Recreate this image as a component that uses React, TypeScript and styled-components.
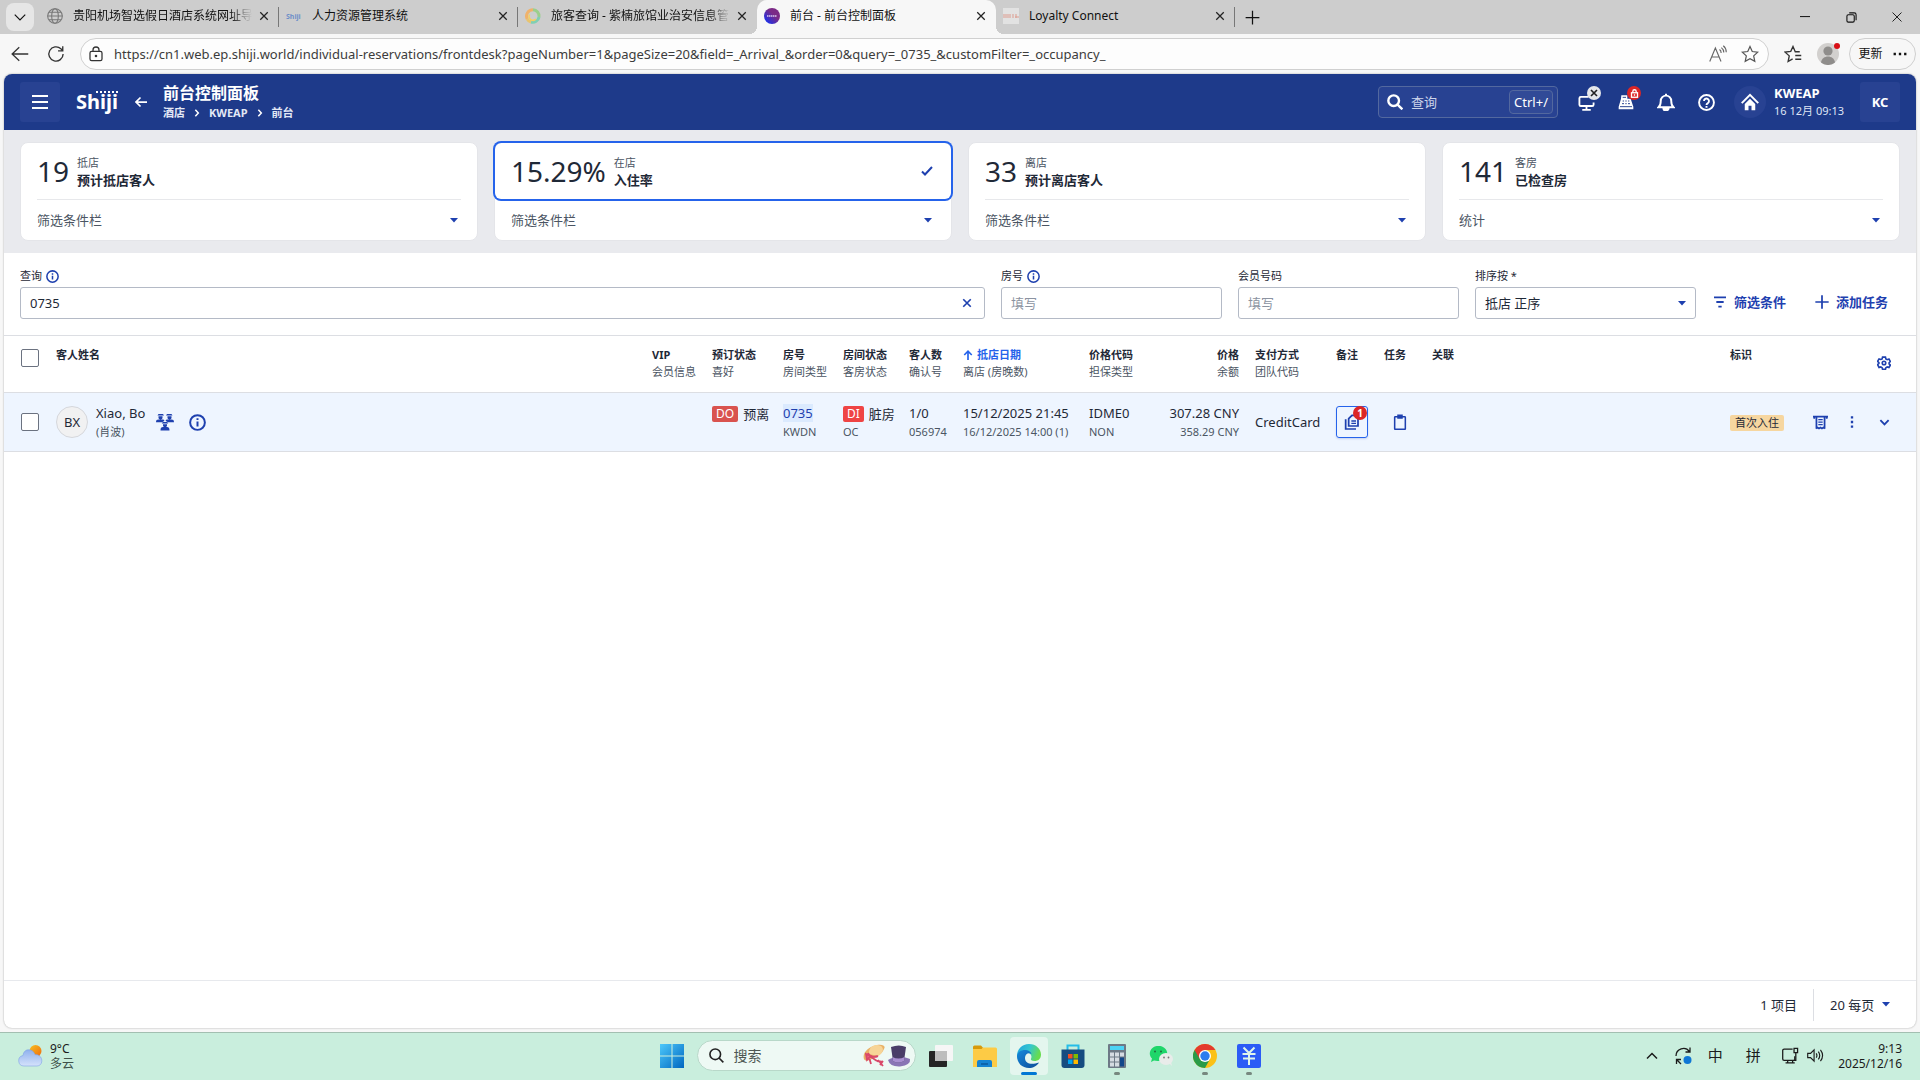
import React from "react";
import styled, { createGlobalStyle } from "styled-components";

const FONT = `"Noto Sans", "Noto Sans CJK SC", sans-serif`;
const navy = "#1e3a8a";
const blue = "#1e40af";
const ink = "#1f2937";
const muted = "#4b5563";

const Global = createGlobalStyle`
  *, *::before, *::after { box-sizing: border-box; }
  body { margin: 0; background: #f7f7f7; color: ${ink}; font: 13px/20px ${FONT}; }
  button, input, select { font: inherit; color: inherit; margin: 0; }
  button { border: 0; padding: 0; background: none; cursor: pointer; }
  svg { display: block; flex: none; }
`;

/* ---------- icons ---------- */

type IconProps = { size?: number; w?: number; color?: string; children?: React.ReactNode };
const Icon = ({ size = 16, w = 2, color = "currentColor", children }: IconProps) => (
  <svg width={size} height={size} viewBox="0 0 24 24" fill="none" stroke={color} strokeWidth={w} aria-hidden="true">
    {children}
  </svg>
);
const InfoIcon = ({ size = 13 }: { size?: number }) => (
  <Icon size={size} w={2.8} color={blue}>
    <circle cx="12" cy="12" r="10.4" />
    <path d="M12 10.5v7M12 6v2.6" />
  </Icon>
);
const Caret = () => (
  <svg width="8" height="5" viewBox="0 0 8 5" aria-hidden="true">
    <path d="M0 0h8L4 4.6z" fill={blue} />
  </svg>
);
const CloseIcon = ({ size = 10, w = 3, color = "#222" }: IconProps) => (
  <Icon size={size} w={w} color={color}><path d="M3 3l18 18M21 3L3 21" /></Icon>
);

/* ---------- browser chrome ---------- */

const Screen = styled.div`
  min-height: 100vh;
  display: flex;
  flex-direction: column;
`;
const TabStrip = styled.div`
  display: flex;
  align-items: center;
  height: 34px;
  background: #cdcdcd;
  color: #111;
  font-size: 12px;
`;
const TabMenu = styled.button`
  display: grid;
  place-items: center;
  width: 28px;
  height: 28px;
  margin: 0 6px;
  border-radius: 8px;
  background: #e6e6e6;
`;
const Tab = styled.div<{ $active?: boolean; $line?: boolean }>`
  position: relative;
  display: flex;
  align-items: center;
  gap: 10px;
  flex: 0 1 239px;
  min-width: 0;
  height: 34px;
  padding: 0 7px;
  padding-bottom: 2px;
  border-radius: 10px 10px 0 0;
  background: ${(p) => (p.$active ? "#f7f7f7" : "none")};
  ${(p) => p.$line && `&::after { content: ""; position: absolute; right: 0; top: 7px; width: 1px; height: 20px; background: #777; }`}
  ${(p) =>
    p.$active &&
    `&::before, &::after { content: ""; position: absolute; bottom: 0; width: 8px; height: 8px; }
     &::before { left: -8px; background: radial-gradient(circle at 0 0, #cdcdcd 8px, #f7f7f7 8px); }
     &::after { right: -8px; background: radial-gradient(circle at 100% 0, #cdcdcd 8px, #f7f7f7 8px); }`}
`;
const TabTitle = styled.span<{ $fade?: boolean }>`
  flex: 1;
  min-width: 0;
  overflow: hidden;
  white-space: nowrap;
  ${(p) => p.$fade && `mask-image: linear-gradient(90deg, #000 88%, transparent);`}
`;
const TabClose = styled.button`
  display: grid;
  place-items: center;
  width: 16px;
  height: 16px;
  margin-left: -6px;
`;
const NewTab = styled(TabClose)`
  margin-left: 9px;
`;
const WindowButtons = styled.div`
  display: flex;
  margin-left: auto;
`;
const WindowButton = styled.button`
  display: grid;
  place-items: center;
  width: 46px;
  height: 34px;
`;
const Toolbar = styled.div`
  display: flex;
  align-items: center;
  gap: 10px;
  height: 40px;
  padding: 0 4px 0 10px;
  color: #333;
`;
const NavButtons = styled.div`
  display: flex;
  gap: 16px;
  padding-right: 4px;
`;
const ToolButton = styled.button<{ $wide?: boolean }>`
  display: grid;
  place-items: center;
  width: ${(p) => (p.$wide ? 28 : 20)}px;
  height: 24px;
`;
const AddressBar = styled.div`
  display: flex;
  align-items: center;
  flex: 1;
  height: 32px;
  padding: 0 8px 0 5px;
  border: 1px solid #d0d0d0;
  border-radius: 16px;
  background: #fdfdfd;
`;
const Address = styled.input`
  flex: 1;
  min-width: 0;
  margin-left: 8px;
  padding: 0;
  border: 0;
  outline: 0;
  background: none;
  color: #3c3c3c;
  font-size: 13px;
`;
const AddressTools = styled.div`
  display: flex;
  gap: 12px;
`;
const Avatar = styled.button`
  position: relative;
  width: 22px;
  height: 22px;
`;
const AvatarDot = styled.i`
  position: absolute;
  right: -1px;
  top: 0;
  width: 6px;
  height: 6px;
  border-radius: 50%;
  background: #d80f16;
`;
const UpdateButton = styled.button`
  display: flex;
  align-items: center;
  justify-content: center;
  gap: 10px;
  width: 67px;
  height: 32px;
  border: 1px solid #cfcfcf;
  border-radius: 16px;
  color: #111;
  font-size: 12px;
`;

/* ---------- page ---------- */

const Page = styled.main`
  flex: 1;
  display: flex;
  flex-direction: column;
  margin: 0 4px 4px;
  border-radius: 8px;
  overflow: hidden;
  background: #fff;
  box-shadow: 0 0 2px rgba(0, 0, 0, 0.35);
`;
const AppHeader = styled.header`
  display: flex;
  align-items: center;
  gap: 16px;
  height: 56px;
  padding: 0 16px;
  background: ${navy};
  color: #fff;
`;
const SquareButton = styled.button`
  display: grid;
  place-items: center;
  width: 40px;
  height: 40px;
  border-radius: 3px;
  background: #284292;
  color: #fff;
  font-weight: 700;
`;
const Logo = styled.span`
  position: relative;
  width: 43px;
  font-size: 20px;
  line-height: 28px;
  font-weight: 700;
`;
const LogoDots = styled.i`
  position: absolute;
  left: 20px;
  right: 0;
  top: 3px;
  height: 2px;
  background: repeating-linear-gradient(90deg, #fff 0 2px, transparent 2px 4px);
`;
const Heading = styled.div`
  flex: 1;
`;
const Title = styled.h1`
  margin: 0;
  font-size: 16px;
  line-height: 22px;
  font-weight: 700;
`;
const Crumbs = styled.nav`
  display: flex;
  align-items: center;
  gap: 8px;
  font-size: 11px;
  line-height: 18px;
  font-weight: 700;
  a { color: #e3e8f6; text-decoration: none; }
`;
const HeaderTools = styled.div`
  display: flex;
  align-items: center;
  gap: 8px;
`;
const HeaderSearch = styled.label`
  display: flex;
  align-items: center;
  gap: 8px;
  width: 180px;
  height: 32px;
  padding: 0 4px 0 8px;
  border: 1px solid #53689f;
  border-radius: 4px;
  background: #284292;
  input { flex: 1; min-width: 0; padding: 0; border: 0; outline: 0; background: none; }
  input::placeholder { color: #cdd5ea; opacity: 1; }
  kbd { padding: 0 4px; border: 1px solid #53689f; border-radius: 4px; font: 13px/22px ${FONT}; background: #314a97; }
`;
const IconRow = styled.div`
  display: flex;
`;
const HeaderIcon = styled.button`
  position: relative;
  display: grid;
  place-items: center;
  width: 40px;
  height: 40px;
  color: #fff;
`;
const HeaderBadge = styled.i<{ $red?: boolean }>`
  position: absolute;
  right: 5px;
  top: 4px;
  display: grid;
  place-items: center;
  width: 14px;
  height: 14px;
  border-radius: 50%;
  background: ${(p) => (p.$red ? "#dc2626" : "#e5e7eb")};
`;
const HomeButton = styled.button`
  display: grid;
  place-items: center;
  width: 32px;
  height: 32px;
  border-radius: 50%;
  background: #284292;
`;
const Property = styled.div`
  margin-right: 8px;
  width: 70px;
  white-space: nowrap;
  font-size: 11px;
  line-height: 18px;
  color: #dfe5f5;
  strong { display: block; font-size: 13px; color: #fff; }
`;

const Cards = styled.section`
  display: grid;
  grid-template-columns: repeat(4, 1fr);
  gap: 16px;
  padding: 12px 16px;
  background: #e9eaee;
`;
const Card = styled.article`
  border: 1px solid #e4e5e9;
  border-radius: 8px;
  background: #fff;
`;
const CardTop = styled.button<{ $selected?: boolean }>`
  display: flex;
  align-items: center;
  gap: 8px;
  width: 100%;
  height: 56px;
  padding: 0 18px 0 16px;
  border-radius: 6px;
  text-align: left;
  ${(p) => p.$selected && `box-shadow: 0 0 0 2px #2563eb;`}
  svg { margin-left: auto; }
`;
const CardNumber = styled.span`
  font-size: 28px;
  line-height: 40px;
`;
const CardLabel = styled.span`
  padding-top: 2px;
  font-size: 11px;
  line-height: 16px;
  color: ${muted};
  strong { display: block; font-size: 13px; line-height: 18px; color: ${ink}; }
`;
const Divider = styled.hr<{ $hidden?: boolean }>`
  height: 1px;
  margin: 0 16px;
  border: 0;
  background: ${(p) => (p.$hidden ? "transparent" : "#e7e8eb")};
`;
const CardMenu = styled.button`
  display: flex;
  align-items: center;
  justify-content: space-between;
  width: 100%;
  height: 40px;
  padding: 0 19px 0 16px;
  color: ${muted};
`;

const Filters = styled.form`
  display: flex;
  align-items: flex-end;
  gap: 16px;
  padding: 15px 28px 16px 16px;
  border-bottom: 1px solid #dcdee3;
`;
const Field = styled.div<{ $grow?: boolean }>`
  flex: ${(p) => (p.$grow ? "1" : "0 0 221px")};
  min-width: 0;
`;
const FieldLabel = styled.label`
  display: flex;
  align-items: center;
  gap: 4px;
  margin-bottom: 3px;
  font-size: 11px;
  line-height: 16px;
`;
const Box = styled.div`
  display: flex;
  align-items: center;
  height: 32px;
  padding: 0 9px;
  border: 1px solid #b4bac6;
  border-radius: 3px;
  background: #fff;
  input, select { flex: 1; min-width: 0; padding: 0; border: 0; outline: 0; background: none; appearance: none; }
  input::placeholder { color: #8b93a1; opacity: 1; }
`;
const TextButton = styled.button`
  display: flex;
  align-items: center;
  gap: 6px;
  height: 32px;
  padding-bottom: 2px;
  color: ${blue};
  font-weight: 700;
  white-space: nowrap;
  & + & { margin-left: 12px; }
`;

const TableArea = styled.section`
  flex: 1;
`;
const Table = styled.table`
  width: 100%;
  border-collapse: separate;
  border-spacing: 0;
  table-layout: fixed;
`;
const Th = styled.th<{ $right?: boolean; $sorted?: boolean; $middle?: boolean }>`
  height: 57px;
  padding: ${(p) => (p.$middle ? "0 8px" : "10px 8px 0")};
  border-bottom: 1px solid #dcdee3;
  vertical-align: ${(p) => (p.$middle ? "middle" : "top")};
  text-align: ${(p) => (p.$right ? "right" : "left")};
  white-space: nowrap;
  font-size: 11px;
  line-height: 17px;
  font-weight: 400;
  color: ${muted};
  strong { display: flex; align-items: center; gap: 4px; justify-content: ${(p) => (p.$right ? "flex-end" : "flex-start")}; color: ${(p) => (p.$sorted ? "#2563eb" : ink)}; }
`;
const Td = styled.td<{ $right?: boolean }>`
  height: 59px;
  padding: 0 8px;
  border-bottom: 1px solid #dcdee3;
  background: #eef5ff;
  text-align: ${(p) => (p.$right ? "right" : "left")};
  white-space: nowrap;
`;
const Check = styled.input`
  display: block;
  appearance: none;
  width: 18px;
  height: 18px;
  margin: 0 0 0 9px;
  border: 1px solid #6b7280;
  border-radius: 2px;
  background: #fff;
`;
const HeadCheck = styled.div`
  padding-bottom: 12px;
`;
const Main = styled.div`
  display: flow-root;
  height: 19px;
  line-height: 19px;
`;
const StatusMain = styled.div`
  display: flex;
  align-items: center;
  gap: 5px;
  height: 19px;
`;
const Sub = styled.div`
  min-height: 17px;
  font-size: 11px;
  line-height: 17px;
  color: ${muted};
`;
const Guest = styled.div`
  display: flex;
  align-items: center;
  gap: 8px;
`;
const Initials = styled.span`
  display: grid;
  place-items: center;
  width: 32px;
  height: 32px;
  border: 1px solid #d5d7dc;
  border-radius: 50%;
  background: #f1f1f2;
`;
const IconButton = styled.button`
  display: grid;
  place-items: center;
  width: 32px;
  height: 32px;
  color: ${blue};
`;
const GuestIcons = styled.div`
  display: flex;
  margin-left: -4px;
`;
const Chip = styled.span<{ $bright?: boolean }>`
  padding: 0 4px;
  border-radius: 2px;
  background: ${(p) => (p.$bright ? "#ef4444" : "#d9534f")};
  color: #fff;
  font-size: 12px;
  line-height: 16px;
`;
const RoomLink = styled.a`
  color: ${blue};
  background: #dbeafe;
  text-decoration: none;
`;
const NoteButton = styled(IconButton)`
  position: relative;
  border: 1px solid #2563eb;
  border-radius: 3px;
  box-shadow: 0 1px 2px rgba(30, 64, 175, 0.2);
`;
const NoteCount = styled.i`
  position: absolute;
  right: 0;
  top: -1px;
  width: 14px;
  height: 14px;
  border-radius: 50%;
  background: #dc2626;
  color: #fff;
  font: 700 10px/14px ${FONT};
`;
const Tag = styled.span`
  display: inline-block;
  padding: 0 5px;
  border-radius: 2px;
  background: #f6d6a0;
  font-size: 11px;
  line-height: 16px;
`;
const Actions = styled.div`
  display: flex;
  justify-content: flex-end;
  margin-right: 8px;
`;
const HeadActions = styled(Actions)`
  padding-bottom: 3px;
`;
const PageFooter = styled.footer`
  display: flex;
  align-items: center;
  justify-content: flex-end;
  height: 48px;
  padding-right: 26px;
  border-top: 1px solid #e7e9ed;
`;
const PageSize = styled.label`
  display: flex;
  align-items: center;
  gap: 7px;
  height: 32px;
  margin-left: 16px;
  padding-left: 16px;
  border-left: 1px solid #dcdee3;
  select { padding: 0; border: 0; outline: 0; background: none; appearance: none; }
`;

/* ---------- desktop taskbar ---------- */

const Taskbar = styled.footer`
  display: grid;
  grid-template-columns: 1fr auto 1fr;
  align-items: center;
  height: 48px;
  padding-bottom: 2px;
  border-top: 1px solid #a3bfb1;
  background: #c9eedd;
  color: #1b1b1b;
  font-size: 12px;
  line-height: 15px;
`;
const Weather = styled.button`
  display: flex;
  align-items: center;
  gap: 7px;
  padding-left: 18px;
  text-align: left;
  small { display: block; font-size: 12px; color: #40514a; }
`;
const Apps = styled.div`
  display: flex;
  align-items: center;
`;
const AppButton = styled.button<{ $active?: boolean; $running?: boolean }>`
  position: relative;
  display: grid;
  place-items: center;
  width: 38px;
  height: 38px;
  margin: 0 3px;
  border-radius: 4px;
  background: ${(p) => (p.$active ? "#e4f6ee" : "none")};
  ${(p) =>
    (p.$active || p.$running) &&
    `&::after { content: ""; position: absolute; bottom: 0; width: ${p.$active ? 16 : 6}px; height: 3px; border-radius: 2px; background: ${p.$active ? "#0078d4" : "#77887f"}; }`}
`;
const TaskSearch = styled.label`
  display: flex;
  align-items: center;
  gap: 10px;
  width: 219px;
  height: 31px;
  margin: 0 3px;
  padding: 0 4px 0 11px;
  border: 1px solid #b8d8c9;
  border-radius: 16px;
  background: #eef9f4;
  input { flex: 1; min-width: 0; padding: 0; border: 0; outline: 0; background: none; font-size: 14px; }
  input::placeholder { color: #4d5652; opacity: 1; }
`;
const Tray = styled.div`
  display: flex;
  align-items: center;
  justify-content: flex-end;
  padding-right: 18px;
`;
const TrayButton = styled.button<{ $w: number }>`
  display: grid;
  place-items: center;
  width: ${(p) => p.$w}px;
  height: 32px;
  font-size: 15px;
`;
const Clock = styled.time`
  margin-left: 12px;
  text-align: right;
`;

/* ---------- data ---------- */

const cards = [
  { value: "19", label: "抵店", title: "预计抵店客人", menu: "筛选条件栏" },
  { value: "15.29%", label: "在店", title: "入住率", menu: "筛选条件栏", selected: true },
  { value: "33", label: "离店", title: "预计离店客人", menu: "筛选条件栏" },
  { value: "141", label: "客房", title: "已检查房", menu: "统计" },
];

const columns: { w: number; head: string; sub?: string; right?: boolean; sorted?: boolean }[] = [
  { w: 60, head: "VIP", sub: "会员信息" },
  { w: 71, head: "预订状态", sub: "喜好" },
  { w: 60, head: "房号", sub: "房间类型" },
  { w: 66, head: "房间状态", sub: "客房状态" },
  { w: 54, head: "客人数", sub: "确认号" },
  { w: 126, head: "抵店日期", sub: "离店 (房晚数)", sorted: true },
  { w: 76, head: "价格代码", sub: "担保类型" },
  { w: 90, head: "价格", sub: "余额", right: true },
  { w: 81, head: "支付方式", sub: "团队代码" },
  { w: 48, head: "备注" },
  { w: 48, head: "任务" },
  { w: 298, head: "关联" },
  { w: 74, head: "标识" },
];

const Favicon = ({ kind }: { kind: string }) => {
  if (kind === "globe")
    return (
      <Icon size={16} w={1.6} color="#777">
        <circle cx="12" cy="12" r="11" /><ellipse cx="12" cy="12" rx="5" ry="11" /><path d="M1 12h22M3 6.5h18M3 17.5h18" />
      </Icon>
    );
  if (kind === "shiji")
    return (
      <svg width="16" height="16" viewBox="0 0 16 16"><text x="0" y="11" fontSize="7" fontWeight="700" fill="#6d8fc9" fontFamily="Noto Sans">Shiji</text></svg>
    );
  if (kind === "ring")
    return (
      <svg width="16" height="16" viewBox="0 0 16 16" fill="none" strokeWidth="3">
        <path d="M2.2 11A6.4 6.4 0 0 1 8 1.8" stroke="#f0b26a" /><path d="M8 1.8A6.3 6.3 0 0 1 14 9" stroke="#9bcf8c" /><path d="M14 9A6.3 6.3 0 0 1 6 14" stroke="#7fcfb4" /><path d="M2.200 11A6.400 6.400 0 0 0 6 14" stroke="#e9c46e" /><path d="M4.500 6.500a4 4 0 0 0 6.500 4.500" stroke="#f4cf62" strokeWidth="1.500" />
      </svg>
    );
  if (kind === "front")
    return (
      <svg width="16" height="16" viewBox="0 0 16 16">
        <defs><linearGradient id="fd" x1="0" y1="1" x2="1" y2="0"><stop offset=".1" stopColor="#1530f0" /><stop offset=".6" stopColor="#7b2a86" /></linearGradient></defs>
        <circle cx="8" cy="8" r="8" fill="url(#fd)" /><path d="M3 8h10" stroke="#d9c9ee" strokeWidth="1.6" strokeDasharray="1.4 .5" />
      </svg>
    );
  return (
    <svg width="16" height="16" viewBox="0 0 16 16"><rect width="16" height="16" fill="#e2e2e2" /><path d="M1 6v4M3 6v4M5 6v4M7 6v4M10 6v4M13 6v4M16 9h-4" stroke="#dc9c8f" strokeWidth="1" /></svg>
  );
};

const tabs = [
  { icon: "globe", title: "贵阳机场智选假日酒店系统网址导", fade: true, line: true },
  { icon: "shiji", title: "人力资源管理系统", line: true },
  { icon: "ring", title: "旅客查询 - 紫楠旅馆业治安信息管", fade: true },
  { icon: "front", title: "前台 - 前台控制面板", active: true },
  { icon: "loyalty", title: "Loyalty Connect", line: true },
];

const Browser = () => (
  <>
    <TabStrip>
      <TabMenu aria-label="标签页"><Icon size={14}><path d="M3 8l9 9 9-9" /></Icon></TabMenu>
      {tabs.map((t) => (
        <Tab key={t.title} $active={t.active} $line={t.line}>
          <Favicon kind={t.icon} />
          <TabTitle $fade={t.fade}>{t.title}</TabTitle>
          <TabClose aria-label="关闭"><CloseIcon /></TabClose>
        </Tab>
      ))}
      <NewTab aria-label="新标签页"><Icon size={15}><path d="M12 1v22M1 12h22" /></Icon></NewTab>
      <WindowButtons>
        <WindowButton aria-label="最小化"><Icon size={10} w={2.400}><path d="M0 11h24" /></Icon></WindowButton>
        <WindowButton aria-label="还原"><Icon size={11} w={2.400}><rect x="2" y="6" width="16" height="16" rx="3" /><path d="M7 2h11a4 4 0 0 1 4 4v12" /></Icon></WindowButton>
        <WindowButton aria-label="关闭窗口"><CloseIcon size={12} w={2} /></WindowButton>
      </WindowButtons>
    </TabStrip>
    <Toolbar>
      <NavButtons>
        <ToolButton aria-label="后退"><Icon size={18} w={1.700}><path d="M23 12H2M11 3l-9.500 9 9.500 9" /></Icon></ToolButton>
        <ToolButton aria-label="刷新"><Icon size={18} w={1.800}><path d="M21.500 12A9.500 9.500 0 1 1 18.500 5L21 7.500M21 1.500v6.300h-6.300" /></Icon></ToolButton>
      </NavButtons>
      <AddressBar>
        <ToolButton aria-label="站点信息">
          <Icon size={16} w={1.900}><rect x="3" y="8" width="18" height="14" rx="2.500" /><path d="M7.500 8V6a4.500 4.500 0 0 1 9 0v2" /><circle cx="12" cy="15" r="1" /></Icon>
        </ToolButton>
        <Address aria-label="地址" defaultValue="https://cn1.web.ep.shiji.world/individual-reservations/frontdesk?pageNumber=1&pageSize=20&field=_Arrival_&order=0&query=_0735_&customFilter=_occupancy_" />
        <AddressTools>
          <ToolButton aria-label="朗读"><Icon size={18} w={1.500} color="#666"><path d="M1 22L8.500 4l7.500 18M4 16h9M14 6c1.500 1 2.200 2.500 2.200 4.500M16.500 3.500c2 1.500 3.200 3.500 3.200 6.500M19 1c2.600 2 4 5 4 8.500" /></Icon></ToolButton>
          <ToolButton aria-label="收藏"><Icon size={18} w={1.600} color="#555"><path d="M12 2l3 6.700 7.300.8-5.400 5 1.500 7.300L12 18.200l-6.400 3.600 1.500-7.300-5.400-5 7.300-.8z" /></Icon></ToolButton>
        </AddressTools>
      </AddressBar>
      <ToolButton $wide aria-label="收藏夹"><Icon size={18} w={1.800}><path d="M21 9h-6L12 2 9 8.500l-7.500 1 5.500 5L5.500 22l6-3.500M15 14h8M15 19h8" /></Icon></ToolButton>
      <Avatar aria-label="个人资料">
        <svg width="22" height="22" viewBox="0 0 22 22"><circle cx="11" cy="11" r="11" fill="#d2d0ce" /><circle cx="11" cy="8" r="4.600" fill="#8f8d8b" /><path d="M4 19.500c1-8 13-8 14 0a11 11 0 0 1-14 0z" fill="#8f8d8b" /></svg>
        <AvatarDot />
      </Avatar>
      <UpdateButton>更新<Icon size={14}><path d="M1 12h4M10 12h4M19 12h4" strokeWidth="4" /></Icon></UpdateButton>
    </Toolbar>
  </>
);

const Crumb = () => <Icon size={8} w={4.500} color="#fff"><path d="M7 2l9 10-9 10" /></Icon>;

const Header = () => (
  <AppHeader>
    <SquareButton aria-label="菜单"><Icon size={16} w={3}><path d="M0 3h24M0 12h24M0 21h24" /></Icon></SquareButton>
    <Logo>Shiji<LogoDots /></Logo>
    <Icon size={12} w={3.500}><path d="M24 12H3M11 3l-9 9 9 9" /></Icon>
    <Heading>
      <Title>前台控制面板</Title>
      <Crumbs aria-label="路径"><a href="#hotel">酒店</a><Crumb /><a href="#kweap">KWEAP</a><Crumb /><a href="#front">前台</a></Crumbs>
    </Heading>
    <HeaderTools>
      <HeaderSearch>
        <Icon size={16} w={3.600}><circle cx="10" cy="10" r="8" /><path d="M15.500 15.500L23 23" /></Icon>
        <input placeholder="查询" aria-label="查询" /><kbd>Ctrl+/</kbd>
      </HeaderSearch>
      <IconRow>
        <HeaderIcon aria-label="设备">
          <Icon size={17} w={2.600}><path d="M15 4H4a2 2 0 0 0-2 2v9a2 2 0 0 0 2 2h16a2 2 0 0 0 2-2v-3M6 22.500h12M12 17v5" /></Icon>
          <HeaderBadge><CloseIcon size={8} w={5} /></HeaderBadge>
        </HeaderIcon>
        <HeaderIcon aria-label="收银">
          <Icon size={16} w={2}>
            <path d="M5 2h9v5h5l4 12v4H1v-4L4.500 7z" fill="#fff" stroke="none" />
            <path d="M7 5h5M7 10.500h2M11 10.500h2M15 10.500h2M6 14.500h3M11 14.500h2M15 14.500h3M3 19h18" stroke={navy} strokeWidth="1.400" />
          </Icon>
          <HeaderBadge $red><Icon size={9} w={3.500} color="#fff"><rect x="4" y="10" width="16" height="12" /><path d="M7.500 10V6.500a4.500 4.500 0 0 1 9 0V10M12 14v4" /></Icon></HeaderBadge>
        </HeaderIcon>
        <HeaderIcon aria-label="通知"><Icon size={18} w={2.600}><path d="M2 19c2.500-2 3-4 3-8.500a7 7 0 0 1 14 0c0 4.500.5 6.500 3 8.500zM12 1v2" /><path d="M8.500 20a3.500 3.500 0 0 0 7 0" fill="currentColor" /></Icon></HeaderIcon>
        <HeaderIcon aria-label="帮助"><Icon size={17} w={2.700}><circle cx="12" cy="12" r="10.500" /><path d="M8.500 10a3.500 3.500 0 1 1 5.500 2.800c-1.300.8-2 1.300-2 2.700M12 17v2.400" /></Icon></HeaderIcon>
      </IconRow>
      <HomeButton aria-label="首页"><Icon size={18} w={2.600} color="#fff"><path d="M1 13.500L12 2.500l11 11" /><path d="M12 7.500l7 7V23h-5v-6h-4v6H5v-8.500z" fill="#fff" stroke="none" /></Icon></HomeButton>
      <Property><strong>KWEAP</strong>16 12月 09:13</Property>
      <SquareButton>KC</SquareButton>
    </HeaderTools>
  </AppHeader>
);

const ReservationTable = () => (
  <TableArea>
    <Table>
      <colgroup>
        <col style={{ width: 44 }} />
        <col />
        {columns.map((c) => <col key={c.head} style={{ width: c.w }} />)}
        <col style={{ width: 120 }} />
      </colgroup>
      <thead>
        <tr>
          <Th $middle><HeadCheck><Check type="checkbox" aria-label="全选" /></HeadCheck></Th>
          <Th><strong>客人姓名</strong></Th>
          {columns.map((c) => (
            <Th key={c.head} $right={c.right} $sorted={c.sorted}>
              <strong>{c.sorted && <Icon size={10} w={4}><path d="M12 24V3M3 12l9-9 9 9" /></Icon>}{c.head}</strong>
              {c.sub}
            </Th>
          ))}
          <Th $middle>
            <HeadActions>
              <IconButton aria-label="设置">
                <Icon size={14} w={2.800}><path d="M9.500 2h5l.7 3 2.300 1.300 3-1 2.500 4.200-2.300 2.100v1.800l2.300 2.100-2.500 4.200-3-1-2.300 1.300-.7 3h-5l-.7-3-2.300-1.300-3 1L1 14.900l2.300-2.100v-1.600L1 9.100l2.500-4.200 3 1L8.800 5z" /><circle cx="12" cy="12" r="3" /></Icon>
              </IconButton>
            </HeadActions>
          </Th>
        </tr>
      </thead>
      <tbody>
        <tr>
          <Td><Check type="checkbox" aria-label="选择 Xiao, Bo" /></Td>
          <Td>
            <Guest>
              <Initials>BX</Initials>
              <div><Main>Xiao, Bo</Main><Sub>(肖波)</Sub></div>
              <GuestIcons>
                <IconButton aria-label="同行客人">
                  <svg width="18" height="18" viewBox="0 0 18 18" fill={blue}>
                    <path d="M2.500 1h4.500l1 1.500H1.500zM11 1h4.500l1 1.500H10zM2.500 3.300h4v1.500c0 2.200-4 2.200-4 0zM11.500 3.300h4v1.500c0 2.200-4 2.200-4 0zM0 9.200c0-2 .8-2.700 2.500-2.700h4C8 6.500 8.300 7 8.300 8l-2.300 1.200zM18 9.200c0-2-.8-2.700-2.500-2.700h-4C10 6.500 9.700 7 9.700 8l2.300 1.200zM6.800 9h4.400l1 1.500H5.800zM7 11.200h4v1.300c0 2.200-4 2.200-4 0zM4.500 17.500c0-2.600.8-3.500 2.500-3.500h4c1.700 0 2.500.9 2.500 3.500z" />
                  </svg>
                </IconButton>
                <IconButton aria-label="详情"><InfoIcon size={17} /></IconButton>
              </GuestIcons>
            </Guest>
          </Td>
          <Td />
          <Td><StatusMain><Chip>DO</Chip>预离</StatusMain><Sub /></Td>
          <Td><Main><RoomLink href="#0735">0735</RoomLink></Main><Sub>KWDN</Sub></Td>
          <Td><StatusMain><Chip $bright>DI</Chip>脏房</StatusMain><Sub>OC</Sub></Td>
          <Td><Main>1/0</Main><Sub>056974</Sub></Td>
          <Td><Main>15/12/2025 21:45</Main><Sub>16/12/2025 14:00 (1)</Sub></Td>
          <Td><Main>IDME0</Main><Sub>NON</Sub></Td>
          <Td $right><Main>307.28 CNY</Main><Sub>358.29 CNY</Sub></Td>
          <Td>CreditCard</Td>
          <Td>
            <NoteButton aria-label="备注">
              <Icon size={16} w={2.600}><path d="M7 18V7l5-5h9v16z" /><path d="M11 10.500h7M11 14h7" strokeWidth="2" /><path d="M2.500 8v14.500H18" /></Icon>
              <NoteCount>1</NoteCount>
            </NoteButton>
          </Td>
          <Td><IconButton aria-label="任务"><Icon size={16} w={2.300}><rect x="4" y="4" width="16" height="19" rx="1" /><path d="M9 2h6v4H9z" fill="currentColor" /></Icon></IconButton></Td>
          <Td />
          <Td><Tag>首次入住</Tag></Td>
          <Td>
            <Actions>
              <IconButton aria-label="账单"><Icon size={15} w={2.800}><path d="M0 2.500h24M2 2v4M22 2v4M5.500 2v20M18.500 2v20M5 21.500l2.300-1.500 2.300 1.500 2.400-1.500 2.300 1.500 2.300-1.500 2.400 1.500" /><path d="M8.500 7.500h7M8.500 11.500h7M8.500 15.500h7" strokeWidth="2" /></Icon></IconButton>
              <IconButton aria-label="更多"><Icon size={14}><path d="M12 2v4M12 10v4M12 18v4" strokeWidth="4" /></Icon></IconButton>
              <IconButton aria-label="展开"><Icon size={11} w={4}><path d="M3 7l9 9 9-9" /></Icon></IconButton>
            </Actions>
          </Td>
        </tr>
      </tbody>
    </Table>
  </TableArea>
);

const WinTaskbar = () => (
  <Taskbar>
    <Weather>
      <svg width="25" height="24" viewBox="0 0 25 24">
        <defs>
          <linearGradient id="cl" x1="0" y1="0" x2="0" y2="1"><stop stopColor="#8fb1ee" /><stop offset="1" stopColor="#d5e2fb" /></linearGradient>
          <linearGradient id="sn" x1="0" y1="0" x2="1" y2="1"><stop stopColor="#f8c020" /><stop offset="1" stopColor="#ee6a10" /></linearGradient>
        </defs>
        <circle cx="17.500" cy="7" r="6" fill="url(#sn)" />
        <path d="M6 22a5.300 5.300 0 0 1-1-10.500C5.500 4 15 4 17 10.500c9 0 8.500 11.500 2 11.500z" fill="url(#cl)" stroke="#7fa3e6" strokeWidth=".6" />
      </svg>
      <span>9°C<small>多云</small></span>
    </Weather>
    <Apps>
      <AppButton aria-label="开始">
        <svg width="24" height="24" viewBox="0 0 23 23">
          <defs><linearGradient id="wn" x1="0" y1="0" x2="1" y2="1"><stop stopColor="#4cc8fb" /><stop offset="1" stopColor="#0067c0" /></linearGradient></defs>
          <path d="M0 0h11v11H0zM12 0h11v11H12zM0 12h11v11H0zM12 12h11v11H12z" fill="url(#wn)" />
        </svg>
      </AppButton>
      <TaskSearch>
        <Icon size={15} w={2.600} color="#222"><circle cx="10" cy="10" r="8.500" /><path d="M16 16l7 7" /></Icon>
        <input placeholder="搜索" aria-label="搜索" />
        <svg width="48" height="24" viewBox="0 0 48 24">
          <path d="M1 15C-1 9 5 3 14 1c6-1 9 1 7 4-2 5-7 8-12 10-4 2-7 2-8 0z" fill="#e9b167" />
          <path d="M6 10C5 3 12-1 18 2c4 3 1 8-3 10z" fill="#f7d497" />
          <path d="M5 9c1 3 5 5 10 3" stroke="#d9486a" strokeWidth="2" fill="none" />
          <path d="M3 10l5 2-4 4zM8 13l6 4M6 13l2 7M14 17l6 1M15 16l5 6M17 21l3-4" stroke="#d9486a" strokeWidth="1.800" fill="#e8607f" />
          <path d="M25 16q4-3 11-3t11 2q1 6-10 7.500Q27 23 25 16z" fill="#8a75b5" />
          <path d="M28 3q8-3 15 0l-2 14q-6 3-11 0z" fill="#4a3d68" />
          <path d="M29.500 13q6 3 12 0l-.5 4q-6 3-11 0z" fill="#a98fd1" />
        </svg>
      </TaskSearch>
      <AppButton aria-label="任务视图">
        <svg width="24" height="22" viewBox="0 0 24 22"><rect x="0" y="6" width="18" height="16" rx="1" fill="#252525" /><rect x="6" y="0" width="18" height="16" rx="1" fill="#f6f6f6" /><rect x="6" y="6" width="12" height="10" fill="#bdbdbd" /></svg>
      </AppButton>
      <AppButton aria-label="文件资源管理器">
        <svg width="24" height="22" viewBox="0 0 24 22"><path d="M0 2q0-1.500 1.500-1.500H8L11 4H0z" fill="#d79a0a" /><path d="M0 4h8.500L10 2.500h12.500q1.500 0 1.500 1.500V22H0z" fill="#fdcb45" /><path d="M4 22v-5q0-2 2-2h11q2 0 2 2v5z" fill="#1583d2" /><path d="M8 19h7" stroke="#0a5a9f" strokeWidth="1.500" /></svg>
      </AppButton>
      <AppButton $active aria-label="Edge">
        <svg width="24" height="24" viewBox="0 0 24 24">
          <defs>
            <linearGradient id="e1" x1="0" y1="0" x2="1" y2=".3"><stop stopColor="#1fa3df" /><stop offset=".55" stopColor="#35c6cf" /><stop offset="1" stopColor="#66dc4f" /></linearGradient>
            <linearGradient id="e2" x1="0" y1="0" x2="1" y2="1"><stop stopColor="#1489dc" /><stop offset="1" stopColor="#0d4c98" /></linearGradient>
          </defs>
          <path d="M0 12C0 5 5 0 12 0s12 5 12 10.500c0 4.500-3 6.500-6.500 6.500-3 0-4-1-3.500-2.200 1.500-3-.5-6.300-5-6.300-5 0-9 3-9 7.500z" fill="url(#e1)" />
          <path d="M0 12c.5-4.500 5-6.500 9-6 3 .5 5 2 5.500 4-3-2-6.500 0-6.500 4 0 5 5.500 7.500 14 4.500C20 22 16 24 12 24 5 24 0 19 0 12z" fill="url(#e2)" />
        </svg>
      </AppButton>
      <AppButton aria-label="应用商店">
        <svg width="24" height="24" viewBox="0 0 24 24"><path d="M6.500 7V1.500h11V7" fill="none" stroke="#25bde8" strokeWidth="2" /><path d="M.5 5.500h23V21q0 3-3 3h-17q-3 0-3-3z" fill="#164c80" /><path d="M7 10h4.500v4.500H7z" fill="#f25022" /><path d="M12.500 10H17v4.500h-4.500z" fill="#7fba00" /><path d="M7 15.500h4.500V20H7z" fill="#00a4ef" /><path d="M12.500 15.500H17V20h-4.500z" fill="#ffb900" /></svg>
      </AppButton>
      <AppButton $running aria-label="计算器">
        <svg width="18" height="24" viewBox="0 0 18 24"><rect width="18" height="24" rx="1" fill="#6d7986" /><path d="M2 2h14v4H2z" fill="#4bd3f4" /><path d="M2 8.500h4v4H2zM7 8.500h4v4H7zM12 8.500h4v4h-4zM2 13.500h4v4H2zM7 13.500h4v4H7zM2 18.500h4v4H2zM7 18.500h4v4H7z" fill="#d5dbe2" /><path d="M12 13.500h4v9h-4z" fill="#12478a" /></svg>
      </AppButton>
      <AppButton aria-label="微信">
        <svg width="24" height="20" viewBox="0 0 24 20"><path d="M2 16l1-3.500A8.700 7.600 0 1 1 8.500 15L5 14.500z" fill="#1fd66a" /><ellipse cx="17" cy="13" rx="7" ry="6" fill="#e9ecea" /><path d="M20 17l3 3-1-4z" fill="#e9ecea" /><g fill="#226b3e"><circle cx="6" cy="5.500" r="1" /><circle cx="12" cy="5.500" r="1" /></g><g fill="#777"><circle cx="15" cy="11.500" r=".9" /><circle cx="19.500" cy="11.500" r=".9" /></g></svg>
      </AppButton>
      <AppButton $running aria-label="Chrome">
        <svg width="24" height="24" viewBox="0 0 24 24"><circle cx="12" cy="12" r="12" fill="#fbc116" /><path d="M12 12L1.600 6A12 12 0 0 0 12 24l5-9z" fill="#2a9b48" /><path d="M12 6h10.400A12 12 0 0 0 1.600 6l5.200 9z" fill="#e33b2e" /><circle cx="12" cy="12" r="6" fill="#fff" /><circle cx="12" cy="12" r="4.700" fill="#2d7cee" /></svg>
      </AppButton>
      <AppButton $running aria-label="收款">
        <svg width="24" height="24" viewBox="0 0 24 24"><rect width="24" height="24" rx="2" fill="#2b5cf6" /><path d="M6.500 3.500L12 9l5.500-5.500M5.500 10h13M6 14.500h12M12 9v12" stroke="#dff5ea" strokeWidth="2" fill="none" /></svg>
      </AppButton>
    </Apps>
    <Tray>
      <TrayButton $w={30} aria-label="显示隐藏的图标"><Icon size={12} w={3}><path d="M2 17L12 7l10 10" /></Icon></TrayButton>
      <TrayButton $w={33} aria-label="更新状态">
        <svg width="17" height="18" viewBox="0 0 17 18" fill="none" stroke="#1b1b1b" strokeWidth="1.300"><path d="M1 9a7.500 7.500 0 0 1 13.500-4.500M15 .5V5h-4.500M1.500 17v-4.500H6M2 13l4 4" /><circle cx="12.500" cy="13" r="4" fill="#0f77d5" stroke="none" /></svg>
      </TrayButton>
      <TrayButton $w={30}>中</TrayButton>
      <TrayButton $w={46}>拼</TrayButton>
      <TrayButton $w={28} aria-label="网络">
        <Icon size={17} w={1.800}><path d="M15 3H3a2 2 0 0 0-2 2v12a2 2 0 0 0 2 2h15v-6M5 22.500h13M8 19v3M15 19v3" /><path d="M17 2h5v6h-5zM19.500 8v11h-3" /></Icon>
      </TrayButton>
      <TrayButton $w={22} aria-label="音量">
        <Icon size={17} w={1.600}><path d="M1 9h4l5-5v16l-5-5H1zM13 9q2 3 0 6M16 6.500q4 5.500 0 11M19 4q6 8 0 16" /></Icon>
      </TrayButton>
      <Clock>9:13<br />2025/12/16</Clock>
    </Tray>
  </Taskbar>
);

export default function App() {
  return (
    <Screen>
      <Global />
      <Browser />
      <Page>
        <Header />
        <Cards>
          {cards.map((c) => (
            <Card key={c.label}>
              <CardTop $selected={c.selected}>
                <CardNumber>{c.value}</CardNumber>
                <CardLabel>{c.label}<strong>{c.title}</strong></CardLabel>
                {c.selected && <Icon size={12} w={4} color={blue}><path d="M2 13l6 6L22 4" /></Icon>}
              </CardTop>
              <Divider $hidden={c.selected} />
              <CardMenu>{c.menu}<Caret /></CardMenu>
            </Card>
          ))}
        </Cards>
        <Filters onSubmit={(e) => e.preventDefault()}>
          <Field $grow>
            <FieldLabel htmlFor="q">查询<InfoIcon /></FieldLabel>
            <Box><input id="q" defaultValue="0735" /><TabClose type="button" aria-label="清除"><CloseIcon w={4} color={blue} /></TabClose></Box>
          </Field>
          <Field>
            <FieldLabel htmlFor="room">房号<InfoIcon /></FieldLabel>
            <Box><input id="room" placeholder="填写" /></Box>
          </Field>
          <Field>
            <FieldLabel htmlFor="member">会员号码</FieldLabel>
            <Box><input id="member" placeholder="填写" /></Box>
          </Field>
          <Field>
            <FieldLabel htmlFor="sort">排序按 *</FieldLabel>
            <Box><select id="sort"><option>抵店 正序</option></select><Caret /></Box>
          </Field>
          <TextButton type="button"><Icon w={2.800}><path d="M3 5h18M6.500 12h11M9.500 19h5" /></Icon>筛选条件</TextButton>
          <TextButton type="button"><Icon w={2.600}><path d="M12 2v20M2 12h20" /></Icon>添加任务</TextButton>
        </Filters>
        <ReservationTable />
        <PageFooter>
          1 项目
          <PageSize><select aria-label="每页数量"><option>20 每页</option></select><Caret /></PageSize>
        </PageFooter>
      </Page>
      <WinTaskbar />
    </Screen>
  );
}
